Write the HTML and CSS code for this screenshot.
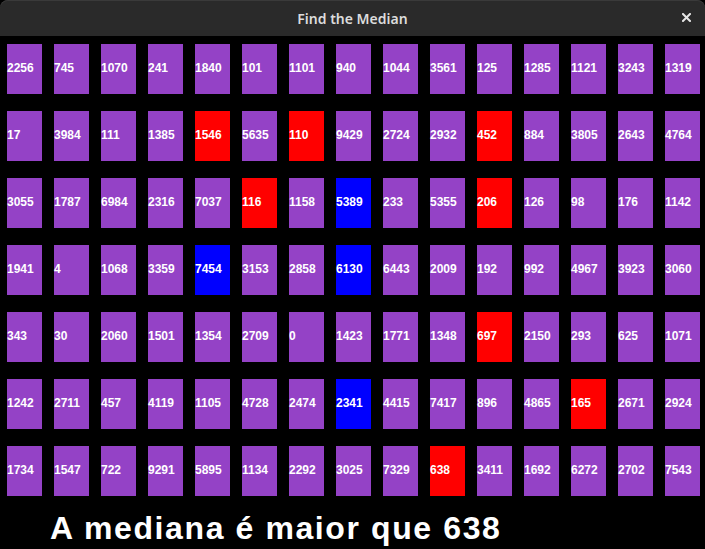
FILE: index.html
```html
<!DOCTYPE html>
<html lang="en">
<head>
    <meta charset="UTF-8">
    <meta name="viewport" content="width=device-width, initial-scale=1.0">
    <title>Find the Median</title>
    <link rel="stylesheet" href="styles.css">
</head>
<body>
    <div class="window">
        <div class="titlebar">
            <span class="title">Find the Median</span>
            <span class="close">
                <svg width="9" height="9" viewBox="0 0 9 9">
                    <path d="M1 1 L8 8 M8 1 L1 8" stroke="#e6e6e6" stroke-width="2" stroke-linecap="square"/>
                </svg>
            </span>
        </div>

        <div class="board" id="board"></div>

        <div class="message">A mediana é maior que 638</div>
    </div>

    <script>
        const numbers = [
            [2256, 745, 1070, 241, 1840, 101, 1101, 940, 1044, 3561, 125, 1285, 1121, 3243, 1319],
            [17, 3984, 111, 1385, 1546, 5635, 110, 9429, 2724, 2932, 452, 884, 3805, 2643, 4764],
            [3055, 1787, 6984, 2316, 7037, 116, 1158, 5389, 233, 5355, 206, 126, 98, 176, 1142],
            [1941, 4, 1068, 3359, 7454, 3153, 2858, 6130, 6443, 2009, 192, 992, 4967, 3923, 3060],
            [343, 30, 2060, 1501, 1354, 2709, 0, 1423, 1771, 1348, 697, 2150, 293, 625, 1071],
            [1242, 2711, 457, 4119, 1105, 4728, 2474, 2341, 4415, 7417, 896, 4865, 165, 2671, 2924],
            [1734, 1547, 722, 9291, 5895, 1134, 2292, 3025, 7329, 638, 3411, 1692, 6272, 2702, 7543]
        ];

        // cards already flipped: too low (red) or too high (blue)
        const low = [1546, 110, 452, 116, 206, 697, 165, 638];
        const high = [5389, 7454, 6130, 2341];

        const board = document.getElementById("board");
        numbers.forEach(function (row) {
            row.forEach(function (n) {
                const card = document.createElement("div");
                card.className = "card";
                if (low.includes(n)) card.classList.add("low");
                if (high.includes(n)) card.classList.add("high");
                card.textContent = n;
                board.appendChild(card);
            });
        });
    </script>
</body>
</html>
```

FILE: styles.css
```css
body {
    margin: 0;
    background-color: #000;
    font-family: "Liberation Sans", Arial, sans-serif;
}

.window {
    width: 705px;
    height: 549px;
    background-color: #000;
    overflow: hidden;
}

.titlebar {
    height: 36px;
    background-color: #2a2a2a;
    border-radius: 8px 8px 0 0;
    box-shadow: inset 0 1px 0 #3a3a3a;
    display: flex;
    justify-content: center;
    align-items: center;
    position: relative;
}

.title {
    font-family: "Noto Sans", "Open Sans", sans-serif;
    font-weight: 600;
    font-size: 14px;
    color: #dcdcdc;
}

.close {
    position: absolute;
    right: 14px;
    top: 13px;
    width: 9px;
    height: 9px;
    display: flex;
}

.board {
    display: grid;
    grid-template-columns: repeat(15, 35px);
    grid-auto-rows: 50px;
    column-gap: 12px;
    row-gap: 17px;
    padding: 8px 0 0 7px;
}

.card {
    background-color: #9442c6;
    color: #fff;
    font-weight: bold;
    font-size: 12px;
    display: flex;
    align-items: center;
    padding-bottom: 2px;
    box-sizing: border-box;
    white-space: nowrap;
}

.card.low {
    background-color: #ff0000;
}

.card.high {
    background-color: #0000ff;
}

.message {
    margin-top: 14px;
    padding-left: 50px;
    color: #fff;
    font-weight: bold;
    font-size: 32px;
    line-height: 36px;
    letter-spacing: 1.6px;
}
```
